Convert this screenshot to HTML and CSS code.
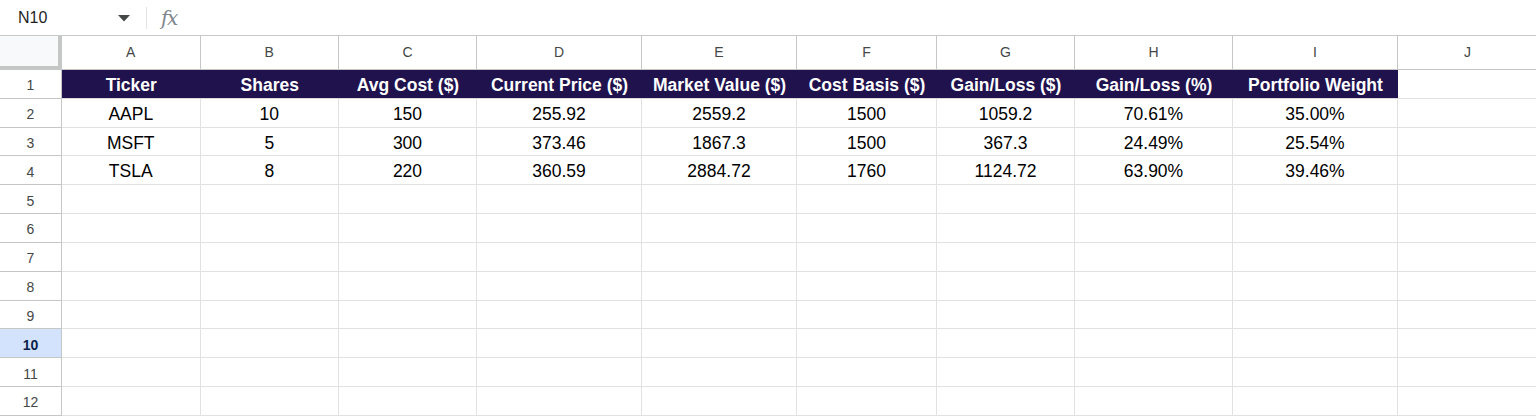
FILE: index.html
```html
<!DOCTYPE html>
<html>
<head>
<meta charset="utf-8">
<link rel="stylesheet" href="styles.css">
</head>
<body>
<div class="fbar">
  <div class="namebox">N10</div>
  <div class="caret"><svg width="12" height="7" viewBox="0 0 12 7"><path d="M0 0 L12 0 L6 6.5 Z" fill="#444746"/></svg></div>
  <div class="sep"></div>
  <div class="fx">fx</div>
</div>
<div class="sheet">
  <div class="corner"></div>
  <div class="ch">A</div><div class="ch">B</div><div class="ch">C</div><div class="ch">D</div><div class="ch">E</div><div class="ch">F</div><div class="ch">G</div><div class="ch">H</div><div class="ch">I</div><div class="ch">J</div>

  <div class="rh">1</div>
  <div class="hd">Ticker</div><div class="hd">Shares</div><div class="hd">Avg Cost ($)</div><div class="hd">Current Price ($)</div><div class="hd">Market Value ($)</div><div class="hd">Cost Basis ($)</div><div class="hd">Gain/Loss ($)</div><div class="hd">Gain/Loss (%)</div><div class="hd">Portfolio Weight</div><div class="c"></div>

  <div class="rh">2</div>
  <div class="c">AAPL</div><div class="c">10</div><div class="c">150</div><div class="c">255.92</div><div class="c">2559.2</div><div class="c">1500</div><div class="c">1059.2</div><div class="c">70.61%</div><div class="c">35.00%</div><div class="c"></div>

  <div class="rh">3</div>
  <div class="c">MSFT</div><div class="c">5</div><div class="c">300</div><div class="c">373.46</div><div class="c">1867.3</div><div class="c">1500</div><div class="c">367.3</div><div class="c">24.49%</div><div class="c">25.54%</div><div class="c"></div>

  <div class="rh">4</div>
  <div class="c">TSLA</div><div class="c">8</div><div class="c">220</div><div class="c">360.59</div><div class="c">2884.72</div><div class="c">1760</div><div class="c">1124.72</div><div class="c">63.90%</div><div class="c">39.46%</div><div class="c"></div>

  <div class="rh">5</div>
  <div class="c"></div><div class="c"></div><div class="c"></div><div class="c"></div><div class="c"></div><div class="c"></div><div class="c"></div><div class="c"></div><div class="c"></div><div class="c"></div>
  <div class="rh">6</div>
  <div class="c"></div><div class="c"></div><div class="c"></div><div class="c"></div><div class="c"></div><div class="c"></div><div class="c"></div><div class="c"></div><div class="c"></div><div class="c"></div>
  <div class="rh">7</div>
  <div class="c"></div><div class="c"></div><div class="c"></div><div class="c"></div><div class="c"></div><div class="c"></div><div class="c"></div><div class="c"></div><div class="c"></div><div class="c"></div>
  <div class="rh">8</div>
  <div class="c"></div><div class="c"></div><div class="c"></div><div class="c"></div><div class="c"></div><div class="c"></div><div class="c"></div><div class="c"></div><div class="c"></div><div class="c"></div>
  <div class="rh">9</div>
  <div class="c"></div><div class="c"></div><div class="c"></div><div class="c"></div><div class="c"></div><div class="c"></div><div class="c"></div><div class="c"></div><div class="c"></div><div class="c"></div>
  <div class="rh sel">10</div>
  <div class="c"></div><div class="c"></div><div class="c"></div><div class="c"></div><div class="c"></div><div class="c"></div><div class="c"></div><div class="c"></div><div class="c"></div><div class="c"></div>
  <div class="rh">11</div>
  <div class="c"></div><div class="c"></div><div class="c"></div><div class="c"></div><div class="c"></div><div class="c"></div><div class="c"></div><div class="c"></div><div class="c"></div><div class="c"></div>
  <div class="rh">12</div>
  <div class="c"></div><div class="c"></div><div class="c"></div><div class="c"></div><div class="c"></div><div class="c"></div><div class="c"></div><div class="c"></div><div class="c"></div><div class="c"></div>
</div>
</body>
</html>
```
FILE: styles.css
```css
html, body {
  margin: 0;
  padding: 0;
  background: #ffffff;
  overflow: hidden;
  width: 1536px;
  height: 419px;
  font-family: "Liberation Sans", Arial, sans-serif;
}

.fbar {
  height: 36px;
  display: flex;
  align-items: center;
  box-sizing: border-box;
  border-bottom: 1px solid #c7c7c7;
}

.namebox {
  width: 100px;
  padding-left: 18px;
  font-size: 16px;
  color: #1f1f1f;
}

.caret {
  width: 12px;
  display: flex;
  align-items: center;
  padding-top: 1px;
}

.sep {
  width: 1px;
  height: 22px;
  background: #e3e3e3;
  margin-left: 16px;
  margin-right: 14px;
}

.fx {
  font-family: "DejaVu Serif", "Liberation Serif", serif;
  font-style: italic;
  font-size: 20px;
  color: #80868b;
  letter-spacing: -1.5px;
}

.sheet {
  display: grid;
  grid-template-columns: 62px 138.5px 138.5px 138px 165px 155px 140px 138px 158px 165px 140px;
  grid-template-rows: 34px repeat(12, 28.82px);
}

.sheet > div {
  box-sizing: border-box;
  display: flex;
  align-items: center;
  justify-content: center;
  overflow: hidden;
  white-space: nowrap;
}

.corner {
  background: #f8f9fa;
  border-right: 4px solid #c4c7c5;
  border-bottom: 4px solid #c4c7c5;
}

.ch {
  border-right: 1px solid #c4c7c5;
  border-bottom: 1px solid #c4c7c5;
  font-size: 14px;
  color: #444746;
  background: #ffffff;
  padding-bottom: 1px;
}

.rh {
  border-right: 1px solid #c4c7c5;
  border-bottom: 1px solid #c4c7c5;
  font-size: 14px;
  color: #444746;
  background: #ffffff;
  padding-top: 3px;
}

.rh.sel {
  background: #d3e3fd;
  color: #0b1f4a;
  font-weight: bold;
}

.hd {
  background: #20124d;
  color: #ffffff;
  font-weight: bold;
  font-size: 17.5px;
  border-bottom: 1px solid #d9d9d9;
  padding-top: 4px;
}

.c {
  border-right: 1px solid #e1e1e1;
  border-bottom: 1px solid #e1e1e1;
  font-size: 17.5px;
  color: #000000;
  padding-top: 3px;
}
```
